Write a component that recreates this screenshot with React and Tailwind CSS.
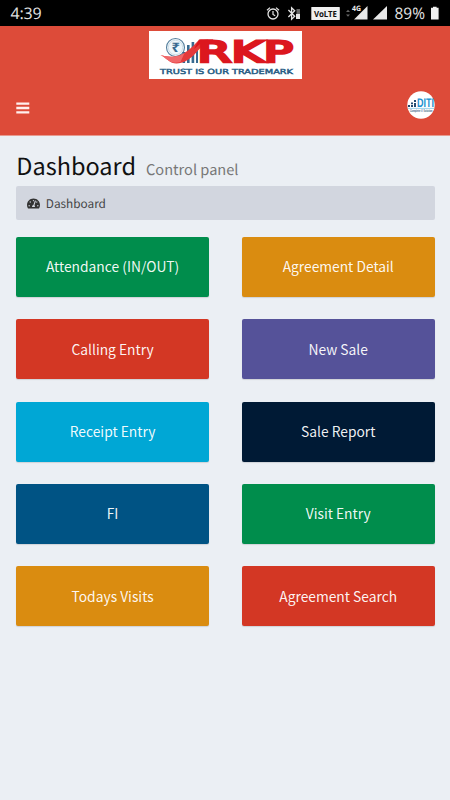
import React from "react";
import { FaTachometerAlt } from "react-icons/fa";

const tiles = [
  ["Attendance (IN/OUT)", "bg-[#008d4c]"],
  ["Agreement Detail", "bg-[#da8c10]"],
  ["Calling Entry", "bg-[#d33724]"],
  ["New Sale", "bg-[#555299]"],
  ["Receipt Entry", "bg-[#00a7d5]"],
  ["Sale Report", "bg-[#001a35]"],
  ["FI", "bg-[#005384]"],
  ["Visit Entry", "bg-[#008d4c]"],
  ["Todays Visits", "bg-[#da8c10]"],
  ["Agreement Search", "bg-[#d33724]"],
];

function StatusIcons() {
  return (
    <svg width="185" height="26" viewBox="0 0 185 26" fill="none" stroke="#e4e4e4">
      {/* alarm clock */}
      <circle cx="8" cy="14" r="5" strokeWidth="1.3" />
      <path d="M8 11v3.4l2.2 1.3M2 10.2l3-2.6M14 10.2l-3-2.6" strokeWidth="1.2" />
      {/* bluetooth */}
      <path d="M23.4 10l6.3 6.2-3.1 3V7.8l3.1 3-6.3 6.2" strokeWidth="1.3" />
      <path d="M31.5 9h3.5v5h-3.5z" fill="#666" stroke="none" />
      <path d="M31 14h4v5h-4z" fill="#e4e4e4" stroke="none" />
      {/* VoLTE badge */}
      <rect x="46.3" y="7" width="28.5" height="13" rx=".6" fill="#f0f0f0" stroke="none" />
      <text x="49" y="16.7" fontSize="8.5" fontWeight="700" fill="#111" stroke="none" textLength="23" lengthAdjust="spacingAndGlyphs" fontFamily="Noto Sans, sans-serif">VoLTE</text>
      <path d="M81 12l2-2.2 2 2.2zM81 14.6l2 2.2 2-2.2z" fill="#666" stroke="none" />
      {/* signal strength */}
      <path d="M102.5 6v13.5H89z" fill="#e8e8e8" stroke="none" />
      <text x="87" y="10.5" fontSize="7.5" fontWeight="700" fill="#eee" stroke="#000" strokeWidth="1.2" paintOrder="stroke" textLength="9" lengthAdjust="spacingAndGlyphs" fontFamily="Noto Sans, sans-serif">4G</text>
      <path d="M122 6v13.5h-14z" fill="#e8e8e8" stroke="none" />
      <text x="129.5" y="19.3" fontSize="16" fill="#dedede" stroke="none" textLength="30.5" lengthAdjust="spacingAndGlyphs" fontFamily="Noto Sans, sans-serif">89%</text>
      {/* battery */}
      <path d="M166 7.7h2v-1h3.6v1h2V19.5H166z" fill="#efefef" stroke="none" />
    </svg>
  );
}

function RkpLogo() {
  return (
    <svg width="153" height="48" viewBox="0 0 153 48" className="block bg-white">
      <circle cx="26.5" cy="16.5" r="9" fill="#eff7fb" stroke="#557f9d" strokeWidth="1.1" />
      <circle cx="26.5" cy="16.5" r="7.2" fill="none" stroke="#b8ccd8" strokeWidth=".6" />
      <text x="22.5" y="21.2" fontSize="13" fontWeight="700" fill="#376a90" textLength="8.5" lengthAdjust="spacingAndGlyphs" fontFamily="Noto Sans, DejaVu Sans, sans-serif">₹</text>
      {/* bar chart */}
      <path d="M33.5 21h2.6v11h-2.6zM38 14h2.6v18H38zM42.6 11h2.6v21h-2.6zM47 13h2v19h-2z" fill="#376a90" />
      {/* swoosh running into the lettering */}
      <path d="M11.5 24c5 1.500 9 2 14 1.500 10-1 18-10 24-16l10-1c-10 9-18 24-32 24-7 0-9-5-16-8.500z" fill="#e43a3b" />
      <path d="M11.5 24c5 1.500 9 2 14 1.500 4-.3 7-1.500 10-3.500l-4 9c-10 3-13-3-20-7z" fill="#f0686a" />
      <path d="M50 8.500h14v4.500H51l-6 5z" fill="#dc171e" />
      <text transform="translate(48.5 31) scale(1.66 1)" fontSize="29" fill="#dc171e" stroke="#dc171e" strokeWidth="2.7" letterSpacing=".4" fontFamily="DejaVu Sans, sans-serif">RKP</text>
      <text x="11" y="43.3" fontSize="7" fill="#285d85" stroke="#285d85" strokeWidth=".45" textLength="133" lengthAdjust="spacingAndGlyphs" fontFamily="DejaVu Sans, sans-serif">TRUST IS OUR TRADEMARK</text>
    </svg>
  );
}

function Avatar() {
  return (
    <svg width="28" height="28" viewBox="0 0 28 28" className="overflow-visible">
      <circle cx="14" cy="14" r="13.7" fill="#fff" />
      <path d="M1 14h2v2H1zM4 11.500h2v1.800H4zM4 14h2v2H4zM7 9h2v2H7zM7 12h2v4H7z" fill="#234b71" />
      <text x="10" y="16" fontSize="12.5" fontWeight="700" fill="#1b91d0" textLength="17" lengthAdjust="spacingAndGlyphs" fontFamily="Liberation Sans, sans-serif">DITI</text>
      <path d="M1 17.400h26" stroke="#70bde1" strokeWidth=".7" />
      <text x="3" y="21.3" fontSize="3.8" fontWeight="700" fill="#31617f" textLength="22.5" lengthAdjust="spacingAndGlyphs" fontFamily="Liberation Sans, sans-serif">Complete IT Solution</text>
    </svg>
  );
}

export default function App() {
  return (
    <div className="flex h-[800px] w-[450px] flex-col overflow-hidden bg-[#ebeff4] font-['Noto_Sans_CJK_SC',sans-serif] [text-rendering:geometricPrecision]">
      <div className="flex h-[26px] shrink-0 items-center justify-between bg-black pl-[10.5px]">
        <span className="font-['Noto_Sans',sans-serif] text-[16px] leading-none tracking-[-0.2px] text-[#dedede]">4:39</span>
        <StatusIcons />
      </div>
      <header className="flex h-[110px] shrink-0 flex-col border-b border-[#e79a8f] bg-[#dd4b39] pt-[5px]">
        <div className="flex justify-center pl-[1px]"><RkpLogo /></div>
        <div className="flex items-start justify-between pt-[12px] pr-[15px] pl-[16px]">
          <svg width="14" height="13" viewBox="0 0 14 13" className="mt-[11px]"><path d="M.3 1.7h13M.3 6h13M.3 10.4h13" stroke="#fff0ee" strokeWidth="2.3" /></svg>
          <Avatar />
        </div>
      </header>
      <main className="flex flex-col pr-[15.5px] pl-[16.3px]">
        <div className="flex h-[50px] items-baseline gap-[10px] pt-[11px] whitespace-nowrap">
          <h1 className="text-[23.5px] leading-[36px] text-[#111]">Dashboard</h1>
          <span className="text-[14.6px] text-[#777]">Control panel</span>
        </div>
        <nav className="flex h-[34px] items-center gap-[5.5px] rounded-[2px] bg-[#d2d6df] pl-[11px] text-[#444]">
          <FaTachometerAlt size={13} color="#333" />
          <span className="pt-[1px] text-[11.8px] leading-none">Dashboard</span>
        </nav>
        <div className="mt-[17px] grid grid-cols-2 gap-x-[33px] gap-y-[22.3px]">
          {tiles.map(([label, color]) => (
            <button key={label} className={`${color} flex h-[60px] items-center justify-center rounded-[2px] pt-[0.5px] text-[13.8px] leading-none whitespace-nowrap text-white/95 shadow-[0_1px_1px_rgba(0,0,0,0.12)]`}>
              {label}
            </button>
          ))}
        </div>
      </main>
    </div>
  );
}
